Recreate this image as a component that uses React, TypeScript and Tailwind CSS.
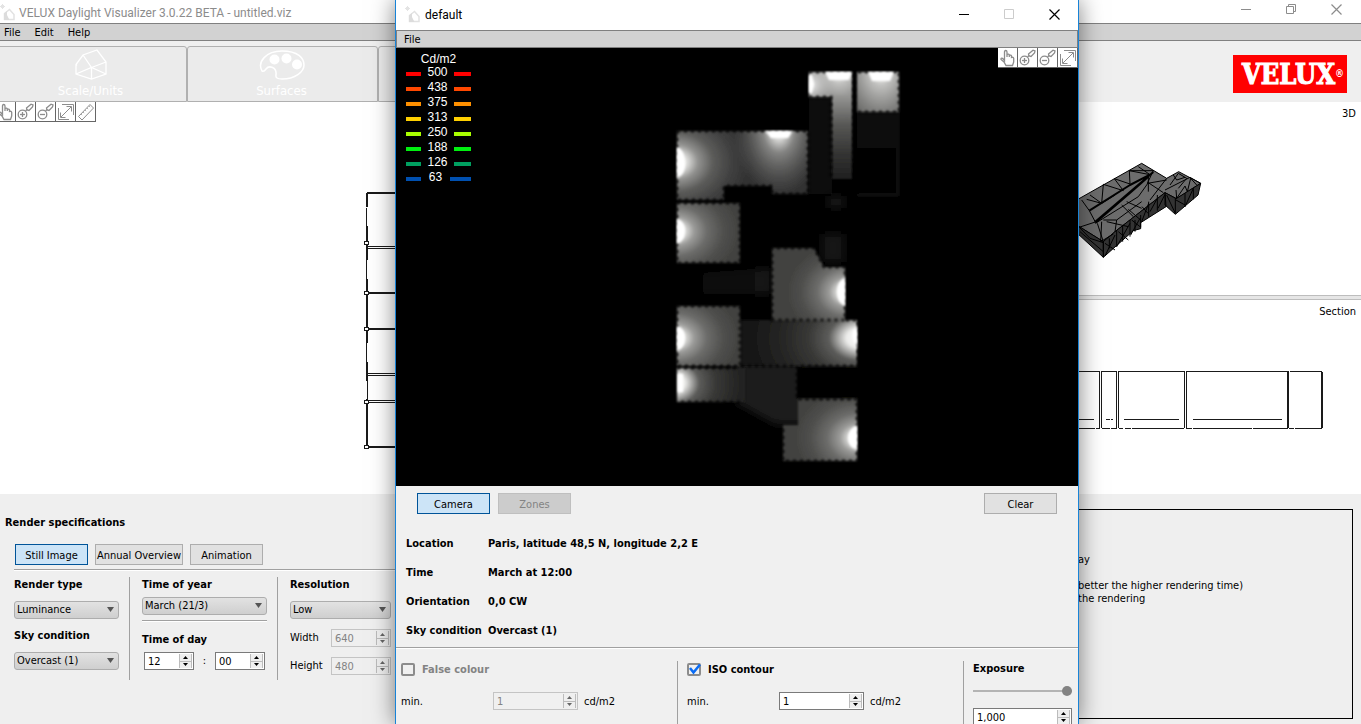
import React from 'react';

const legend = [
  { value: '500', bar: 'bg-[#ff0000]' },
  { value: '438', bar: 'bg-[#ff4800]' },
  { value: '375', bar: 'bg-[#ff9000]' },
  { value: '313', bar: 'bg-[#ffd000]' },
  { value: '250', bar: 'bg-[#aaff00]' },
  { value: '188', bar: 'bg-[#00f010]' },
  { value: '126', bar: 'bg-[#00a060]' },
  { value: '63', bar: 'bg-[#0050b0]' },
];

const details = [
  { label: 'Location', value: 'Paris, latitude 48,5 N, longitude 2,2 E' },
  { label: 'Time', value: 'March at 12:00' },
  { label: 'Orientation', value: '0,0 CW' },
  { label: 'Sky condition', value: 'Overcast (1)' },
];

/* ---------- icons ---------- */

const AppIcon = () => (
  <svg width="16" height="18" viewBox="0 0 16 18" fill="none" className="shrink-0">
    <path d="M4.500 15.500V9.500l5-4 4.500 5v5z" stroke="#e2e2e2" strokeWidth="1.500" />
    <path d="M4 16V9.500l3-2.500v4L9.500 16z" fill="#dcdcdc" />
    <path d="M2.500 0v5M0 2.500h5M1 1l3 3M4 1L1 4" stroke="#e4e4e4" />
  </svg>
);

const HandIcon = () => (
  <svg width="18" height="18" viewBox="0 0 18 18" fill="none" stroke="#8c8c8c" strokeWidth="1.300">
    <path d="M5.500 11.500V3q0-1.500 1.200-1.500T8 3v5V5.500q2-.8 2.300.5v2V6.300q1.900-.6 2.200.7v1.500q1.800-.8 2.200.8V13l-1.200 3.500H7L5 13 2 10.500q-.3-2 1.600-1.200z" />
  </svg>
);

const ZoomIcon = ({ plus }: { plus?: boolean }) => (
  <svg width="18" height="18" viewBox="0 0 18 18" fill="none" stroke="#8c8c8c" strokeWidth="1.300">
    <circle cx="5.500" cy="11.500" r="4.300" />
    <path d="M3 11.500h5" />
    {plus && <path d="M5.500 9v5" />}
    <path d="M8.500 8l2-2M10 7l-.5-2L14 1.200l2 .8-.5 2L12 7.500z" />
  </svg>
);

const FitIcon = () => (
  <svg width="18" height="18" viewBox="0 0 18 18" fill="none" stroke="#8c8c8c">
    <path d="M5 1.500h11.500V12M1.500 5v11.500H12M4 14L14 4M9.500 3.500h5v5M3.500 9.500v5h5" />
  </svg>
);

const RulerIcon = () => (
  <svg width="18" height="18" viewBox="0 0 18 18" fill="none" stroke="#8c8c8c">
    <path d="M1.500 13.500L13 1.500 16.500 5 5 17z" />
    <path d="M4 11l1.500 1.500M6 9l1.500 1.500M8 7l1.500 1.500M10 5l1.500 1.500M12 3l1.500 1.500" strokeDasharray="1 1" />
  </svg>
);

const HouseIcon = () => (
  <svg width="32" height="32" viewBox="0 0 32 32" fill="none" stroke="#fff" strokeWidth="1.300">
    <path d="M1 15.500L8 6 22 1l9 12v12L16.500 30 1 25zM8 6l8.500 12.500L31 13M16.500 18.500v11M1 25l15.500-6.500L31 25M1 15.500l1 1" />
  </svg>
);

const PaletteIcon = () => (
  <svg width="46" height="30" viewBox="0 0 46 30" fill="none" stroke="#fff" strokeWidth="1.500">
    <path d="M3 21C-2 12 7 1 23 1s22 7 22 14-9 14-22 14q-7 0-6-4c1-8-7-10-10-6q-2 3-4 2z" />
    <g fill="#fff" stroke="none">
      <circle cx="15.500" cy="9.500" r="5" />
      <circle cx="27.500" cy="8.500" r="5" />
      <circle cx="38" cy="14.500" r="5" />
    </g>
  </svg>
);

const MinimizeIcon = () => (
  <svg width="11" height="11" viewBox="0 0 11 11" stroke="currentColor"><path d="M0 5.500h10" /></svg>
);
const MaximizeIcon = () => (
  <svg width="11" height="11" viewBox="0 0 11 11" stroke="currentColor" fill="none"><path d="M.5.500h9v9h-9z" /></svg>
);
const RestoreIcon = () => (
  <svg width="11" height="11" viewBox="0 0 11 11" stroke="currentColor" fill="none">
    <path d="M.5 2.500h7v7h-7zM2.500 2V.500h7v7H8" />
  </svg>
);
const CloseIcon = () => (
  <svg width="11" height="11" viewBox="0 0 11 11" stroke="currentColor" strokeWidth="1.200"><path d="M.5.500l10 10M10.500.500l-10 10" /></svg>
);

/* ---------- controls ---------- */

const ToolButton = ({ label, children }: { label: string; children: React.ReactNode }) => (
  <button aria-label={label} className="flex h-5 w-5 items-center justify-center border-r border-b border-[#666] bg-white">
    {children}
  </button>
);

const PushButton = ({ active, disabled, wide, children }: { active?: boolean; disabled?: boolean; wide?: boolean; children: React.ReactNode }) => {
  const tone = active
    ? 'border-[#005499] bg-[#cce4f7]'
    : disabled
      ? 'border-[#bfbfbf] bg-[#cccccc] text-[#838383]'
      : 'border-[#adadad] bg-[#e1e1e1]';
  return (
    <button disabled={disabled} className={`h-[21px] border pt-[2px] text-center whitespace-nowrap ${wide ? 'w-[88px]' : 'w-[73px]'} ${tone}`}>
      {children}
    </button>
  );
};

const Dropdown = ({ id, value, label }: { id: string; value: string; label: string }) => (
  <div className="relative">
    <select
      id={id}
      aria-label={label}
      className="block h-[18px] w-full appearance-none rounded-[3px] border border-[#adadad] bg-linear-to-b from-[#e2e2e2] to-[#cfcfcf] pl-[2px] leading-4"
    >
      <option>{value}</option>
    </select>
    <svg width="7" height="5" viewBox="0 0 7 5" className="pointer-events-none absolute top-[6px] right-[5px]">
      <path d="M0 0h7L3.500 5z" fill="#555" />
    </svg>
  </div>
);

const Spinner = ({ id, value, disabled, label }: { id: string; value: string; disabled?: boolean; label: string }) => (
  <div className={`flex h-[18px] w-full border ${disabled ? 'border-[#c4c4c4] text-[#838383]' : 'border-[#7a7a7a] bg-white'}`}>
    <input id={id} aria-label={label} defaultValue={value} disabled={disabled} className="w-0 min-w-0 flex-1 bg-transparent pt-[2px] pl-[3px] outline-none" />
    <div className="m-px flex w-[13px] shrink-0 flex-col border-x border-[#bcbcbc] bg-[#efefef]">
      <button aria-label={`Increase ${label}`} disabled={disabled} className="flex flex-1 items-center justify-center border-b border-[#bcbcbc]">
        <svg width="5" height="3" viewBox="0 0 5 3"><path d="M0 3h5L2.500 0z" fill={disabled ? '#666' : '#000'} /></svg>
      </button>
      <button aria-label={`Decrease ${label}`} disabled={disabled} className="flex flex-1 items-center justify-center">
        <svg width="5" height="3" viewBox="0 0 5 3"><path d="M0 0h5L2.500 3z" fill={disabled ? '#666' : '#000'} /></svg>
      </button>
    </div>
  </div>
);

const CheckBox = ({ id, checked, label }: { id: string; checked?: boolean; label: string }) => (
  <div className="flex h-4 items-center gap-[7px]">
    <span className="relative flex">
      <input id={id} type="checkbox" defaultChecked={checked} className="peer h-[13px] w-[14px] appearance-none rounded-[2px] border-2 border-[#8c8c8c]" />
      <svg width="14" height="13" viewBox="0 0 14 13" fill="none" className="pointer-events-none absolute inset-0 hidden peer-checked:block">
        <path d="M3 5l3.500 4.500L13 1.500" stroke="#0a6cf5" strokeWidth="2.500" />
      </svg>
    </span>
    <label htmlFor={id} className={`pt-px font-bold ${checked ? '' : 'text-[#838383]'}`}>{label}</label>
  </div>
);

/* ---------- drawings ---------- */

const PlanDrawing = () => (
  <svg viewBox="0 0 180 840" className="mt-[58px] ml-[340px] h-[280px] w-[60px]" fill="none" stroke="#1a1a1a" shapeRendering="crispEdges">
    <path d="M81 39H180M81 339H180M81 447H180M81 801H180" strokeWidth="6" />
    <path d="M81 39V82M81 138V240M81 297V489M81 546V603M81 657V801" strokeWidth="6" />
    <path d="M80 84V138M80 240V297M80 489V546M82 603V657M81 199H180M81 205H180M81 580H180M81 586H180M81 661H180M81 667H180" strokeWidth="3" />
    <g fill="#fff" strokeWidth="3">
      <path d="M74 184h12v9H74zM74 334h12v9H74zM74 442h12v9H74zM74 660h12v9H74zM74 796h12v9H74z" />
    </g>
  </svg>
);

const ModelDrawing = () => (
  <svg viewBox="0 0 873 465" className="block h-[155px] w-[291px]" stroke="#000" strokeWidth="3" strokeLinejoin="round">
    <path d="M20 180L215 70 290 115 326 95 392 130 320 176 285 158 135 275 100 305 20 255z" fill="#6c6c6c" />
    <path d="M20 255L100 305V352L20 278zM100 305L135 275 285 158 288 200 212 248V266L190 272 100 352zM285 158L318 176 392 130 384 165 316 223 285 195z" fill="#333" />
    {/* long partition strips */}
    <path d="M235 110L190 150 76 248M75 246L250 96M58 212L180 135 240 104" fill="none" strokeWidth="6" />
    <path d="M178 92H250M205 80L240 104 178 92M60 165L95 190 100 133 160 152 133 116 180 132 178 92M50 178L95 190M35 180L58 212 76 246 27 262M95 190L135 165M76 250L205 170 235 128 280 158M235 110V155M215 185L140 240 100 240M110 245L175 260M155 195L190 230M170 185L215 205M95 245L92 305 130 282M82 250L100 305M140 240L135 275M175 208L212 240M250 92L232 130 290 120M290 115L240 180M300 135L325 100 350 115 325 145M310 105L320 120 345 112M285 150L360 112 392 130M318 150L320 175 345 138 352 155 362 115 380 135" fill="none" />
    <path d="M140 270V320M180 240V290M212 225V262M236 185V230M262 165V212M105 310L135 330M105 348L135 285M140 320L180 250M145 275L175 300M182 285L210 235M185 240L210 260M215 245L236 190M216 200L234 220M240 215L262 175M264 205L284 165M28 262L60 295 100 308M290 165L316 220M318 180L345 195M316 176V220M345 160V200L370 145V178M30 275L100 335M118 295V325M158 255V305M195 240V275" fill="none" />
  </svg>
);

const SectionDrawing = () => (
  <svg viewBox="0 0 873 432" className="block h-[144px] w-[291px]" fill="none" stroke="#1a1a1a" strokeWidth="3" shapeRendering="crispEdges">
    <path d="M0 64H88M94 64H140M146 64H343M349 64H654M660 64H756" />
    <path d="M0 235H75M79 235H90M96 235H120M124 235H140M146 235H160M166 235H183M187 235H343M349 235H365M370 235H546M550 235H654M658 235H672M676 235H756" />
    <path d="M88 64V235M94 64V235M140 64V235M146 64V235M343 64V235M349 64V235M0 208H72M108 208H120M123 208H129M162 208H327M369 208H636" />
    <path d="M654 64V235M756 66V233" strokeWidth="6" />
  </svg>
);

type Glow = { id: string; x: number; y: number; rx: number; ry: number; tones: string[] };

const roomTones = ['#9a9a98', '#6c6c6a', '#50504e', '#424240'];
const hallTones = ['#c0c0be', '#a4a4a2', '#848482', '#686866'];
const dimTones = ['#5c5c5a', '#383836', '#262625', '#191919'];

const glows: Glow[] = [
  { id: 'topHall', x: 839, y: 70, rx: 40, ry: 46, tones: hallTones },
  { id: 'topRight', x: 881, y: 70, rx: 38, ry: 52, tones: hallTones },
  { id: 'living', x: 675, y: 162, rx: 76, ry: 60, tones: ['#929290', '#5c5c5a', '#404040', '#303030'] },
  { id: 'roomA', x: 675, y: 231, rx: 64, ry: 50, tones: roomTones },
  { id: 'roomB', x: 847, y: 292, rx: 60, ry: 50, tones: roomTones },
  { id: 'roomC', x: 675, y: 338, rx: 64, ry: 50, tones: roomTones },
  { id: 'passage', x: 860, y: 338, rx: 104, ry: 76, tones: dimTones },
  { id: 'corridor', x: 674, y: 383, rx: 84, ry: 70, tones: dimTones },
  { id: 'roomD', x: 859, y: 438, rx: 64, ry: 50, tones: roomTones },
];

// Luminance result of the rendered floor plan, one radial falloff per window
const Luminance = () => (
  <svg viewBox="396 48 682 438" className="block h-[438px] w-full bg-black">
    <defs>
      {glows.map((g) => (
        <radialGradient
          key={g.id}
          id={g.id}
          gradientUnits="userSpaceOnUse"
          cx="0"
          cy="0"
          r="1"
          gradientTransform={`translate(${g.x} ${g.y}) scale(${g.rx} ${g.ry})`}
        >
          <stop offset="0" stopColor="#ffffff" />
          <stop offset=".13" stopColor="#ececea" />
          <stop offset=".3" stopColor={g.tones[0]} />
          <stop offset=".5" stopColor={g.tones[1]} />
          <stop offset=".75" stopColor={g.tones[2]} />
          <stop offset="1" stopColor={g.tones[3]} />
        </radialGradient>
      ))}
      <radialGradient id="livingTop" gradientUnits="userSpaceOnUse" cx="0" cy="0" r="1" gradientTransform="translate(779 129) scale(46 68)">
        <stop offset="0" stopColor="#fff" />
        <stop offset=".16" stopColor="#e8e8e6" stopOpacity=".9" />
        <stop offset=".35" stopColor="#a0a09e" stopOpacity=".75" />
        <stop offset=".65" stopColor="#787876" stopOpacity=".5" />
        <stop offset="1" stopColor="#666" stopOpacity="0" />
      </radialGradient>
      <radialGradient id="hallLeft" gradientUnits="userSpaceOnUse" cx="809" cy="85" r="26">
        <stop offset="0" stopColor="#fff" />
        <stop offset="1" stopColor="#aaa" stopOpacity="0" />
      </radialGradient>
      <linearGradient id="hallDown" x1="0" y1="0" x2="0" y2="1">
        <stop offset="0" stopColor="#989896" />
        <stop offset=".35" stopColor="#585856" />
        <stop offset=".7" stopColor="#343433" />
        <stop offset="1" stopColor="#202020" />
      </linearGradient>
      <linearGradient id="faint" x1="0" y1="0" x2="1" y2="0">
        <stop offset="0" stopColor="#020202" />
        <stop offset=".6" stopColor="#0c0c0c" />
        <stop offset="1" stopColor="#161616" />
      </linearGradient>
      <filter id="soft"><feGaussianBlur stdDeviation="0.8" /></filter>
      <filter id="softer" x="-30%" y="-30%" width="160%" height="160%"><feGaussianBlur stdDeviation="4" /></filter>
    </defs>
    <g filter="url(#soft)">
      <path d="M809 98h23v97h-23zM857 112h42v84h-42z" fill="#0b0b0b" />
      <path d="M852 148h44v47h-44z" fill="#040404" />
      <path d="M898 112v83h-40" fill="none" stroke="#141414" strokeWidth="2" />
      <path d="M724 186h48v8h73v126H740V203h-16z" fill="#040404" />
      <path d="M678 403h60l34 12 25 10-14 36H678z" fill="#050505" />
    </g>
    <g filter="url(#softer)">
      <path d="M678 274l94-6v26H678z" fill="url(#faint)" />
      <path d="M828 196h16v12h-16z" fill="#181818" />
      <path d="M822 234h22v28h-22z" fill="#141414" />
      <path d="M735 362h70v38l20 24h-50l-40-22z" fill="#1a1a1a" />
    </g>
    <g filter="url(#soft)">
      <path d="M797 367h60v32h-60z" fill="#030303" />
      <path d="M809 72h43v25h-43z" fill="url(#topHall)" />
      <path d="M809 72h43v25h-43z" fill="url(#hallLeft)" />
      <path d="M832 95h20v84h-20z" fill="url(#hallDown)" />
      <path d="M857 72h42v40h-42z" fill="url(#topRight)" />
      <path d="M677 131h131v63h-36v-8h-48v14h-47z" fill="url(#living)" />
      <path d="M677 131h131v63h-36v-8h-48z" fill="url(#livingTop)" />
      <path d="M677 203h63v60h-63z" fill="url(#roomA)" />
      <path d="M740 320h117v46H740z" fill="url(#passage)" />
      <path d="M772 248h42l10 19h21v53h-73z" fill="url(#roomB)" />
      <path d="M677 306h63v60h-63z" fill="url(#roomC)" />
      <path d="M677 368h68v34h-68z" fill="url(#corridor)" />
      <path d="M798 399h59v62h-74v-36h15z" fill="url(#roomD)" />
    </g>
    {/* sampled wall edges */}
    <g fill="none" stroke="#000" strokeWidth="3" strokeDasharray="3 4" opacity=".7" filter="url(#soft)">
      <path d="M809 72h90v40h-42M854 74v106M809 97h22v82M677 131h131v63h-36v-8h-48v14h-47z" />
      <path d="M677 203h63v60h-63zM772 320v-72h42l10 19h21v53zM677 306h63v60h-63z" />
      <path d="M741 366h56v33h60M740 402h-63M677 368h63M846 320h12v46h-60M798 399h59v62h-74v-36" />
    </g>
    {/* windows */}
    <g fill="#fff" filter="url(#soft)">
      <path d="M825 72h27l-3 8h-20zM868 72h26l-4 9h-18zM809 75h3l2 9-2 9h-3z" />
      <path d="M677 147q7 2 8 15t-8 16zM765 131h28l-5 7h-17z" />
      <path d="M677 219q8 2 8 12t-8 13zM845 277q-8 4-8 15t8 14z" />
      <path d="M677 326q8 2 8 12t-8 13zM857 327q-6 3-4 10t4 11zM678 374h5v18h-5zM857 425q-9 4-9 13t9 12z" />
    </g>
  </svg>
);

/* ---------- windows ---------- */

const MainWindow = () => (
  <div className="flex h-full flex-col">
    <header className="flex h-[23px] shrink-0 items-center justify-between bg-white text-[#8c8c8c]">
      <div className="flex items-center gap-[3px] pt-[2px] font-['Roboto',sans-serif] text-[12px]">
        <AppIcon />
        <span>VELUX Daylight Visualizer 3.0.22 BETA - untitled.viz</span>
      </div>
      <div className="flex gap-[34px] pr-[19px] pb-1">
        <button aria-label="Minimize"><MinimizeIcon /></button>
        <button aria-label="Restore"><RestoreIcon /></button>
        <button aria-label="Close"><CloseIcon /></button>
      </div>
    </header>
    <nav className="flex h-[18px] shrink-0 items-center gap-[14px] border-y border-[#808080] bg-[#d2d2d2] pt-px pl-1">
      <button>File</button>
      <button>Edit</button>
      <button>Help</button>
    </nav>

    <div className="flex h-[61px] shrink-0 items-end justify-between">
      <div className="flex text-[13px] text-white">
        <button className="-ml-1 flex h-14 w-[191px] flex-col items-center justify-between rounded-t-[3px] border border-[#b0b0b0] bg-[#ebebeb] pt-[2px] pr-[2px] pb-[2px] leading-4">
          <HouseIcon />
          Scale/Units
        </button>
        <button className="flex h-14 w-[191px] flex-col items-center justify-between rounded-t-[3px] border border-[#b0b0b0] bg-[#ebebeb] pt-[3px] pr-[2px] pb-[2px] leading-4">
          <PaletteIcon />
          Surfaces
        </button>
        <button aria-label="Next step" className="h-14 w-[191px] rounded-t-[3px] border border-[#b0b0b0] bg-[#ebebeb]" />
      </div>
      <div className="mr-[14px] mb-[9px] flex h-[38px] w-[114px] items-center justify-end bg-[#ff0000] pr-[3px] font-['DejaVu_Serif_Condensed','DejaVu_Serif',serif] text-[27px] leading-none font-bold text-white [-webkit-text-stroke:1px_white]">
        VELUX<span className="font-['DejaVu_Sans_Condensed',sans-serif] text-[10px] [-webkit-text-stroke:0]">®</span>
      </div>
    </div>

    <main className="flex min-h-0 flex-1 bg-white">
      <section className="min-w-0 flex-1">
        <div className="-ml-1 flex">
          <ToolButton label="Pan"><HandIcon /></ToolButton>
          <ToolButton label="Zoom in"><ZoomIcon plus /></ToolButton>
          <ToolButton label="Zoom out"><ZoomIcon /></ToolButton>
          <ToolButton label="Fit view"><FitIcon /></ToolButton>
          <ToolButton label="Measure"><RulerIcon /></ToolButton>
        </div>
        <PlanDrawing />
      </section>
      <section className="w-[291px] shrink-0">
        <h2 className="h-[38px] pt-1 pr-[5px] text-right">3D</h2>
        <ModelDrawing />
        <div className="h-[5px] border-y border-[#bdbdbd] bg-[#e6e6e6]" />
        <h2 className="h-[50px] pt-1 pr-[5px] text-right">Section</h2>
        <SectionDrawing />
      </section>
    </main>

    <footer className="flex h-[230px] shrink-0 justify-between">
      <section className="w-[480px] pt-[21px]">
        <h2 className="pl-[5px] font-bold">Render specifications</h2>
        <div className="mt-[13px] flex gap-[7px] pl-[15px]">
          <PushButton active>Still Image</PushButton>
          <PushButton wide>Annual Overview</PushButton>
          <PushButton>Animation</PushButton>
        </div>
        <div className="mt-1 ml-[14px] h-[2px] border-t border-[#a0a0a0] bg-white" />
        <div className="mt-[6px] ml-[14px] flex h-[103px]">
          <div className="w-[116px] border-r border-[#a0a0a0] pr-[10px]">
            <label htmlFor="render-type" className="mb-2 block font-bold">Render type</label>
            <Dropdown id="render-type" label="Render type" value="Luminance" />
            <label htmlFor="sky" className="mt-[9px] mb-2 block font-bold">Sky condition</label>
            <Dropdown id="sky" label="Sky condition" value="Overcast (1)" />
          </div>
          <div className="w-[148px] border-r border-[#a0a0a0] pr-[10px] pl-3">
            <label htmlFor="year" className="mb-1 block font-bold">Time of year</label>
            <Dropdown id="year" label="Time of year" value="March (21/3)" />
            <div className="mt-[5px] h-[2px] border-t border-[#a0a0a0] bg-white" />
            <label htmlFor="hour" className="mt-[10px] mb-1 block font-bold">Time of day</label>
            <div className="flex items-center px-[2px]">
              <div className="w-[50px]"><Spinner id="hour" label="Hour" value="12" /></div>
              <span className="w-[21px] text-center">:</span>
              <div className="w-[50px]"><Spinner id="minute" label="Minute" value="00" /></div>
            </div>
          </div>
          <div className="w-[113px] pl-3">
            <label htmlFor="resolution" className="mb-2 block font-bold">Resolution</label>
            <Dropdown id="resolution" label="Resolution" value="Low" />
            <div className="mt-[10px] flex items-center">
              <label htmlFor="width" className="w-[41px] shrink-0">Width</label>
              <Spinner id="width" label="Width" value="640" disabled />
            </div>
            <div className="mt-[10px] flex items-center">
              <label htmlFor="height" className="w-[41px] shrink-0">Height</label>
              <Spinner id="height" label="Height" value="480" disabled />
            </div>
          </div>
        </div>
      </section>
      <section className="mt-[15px] mr-2 mb-[5px] w-[300px] border border-black pt-[43px] pl-[24px] leading-[13px]">
        <p>ay</p>
        <p className="mt-[13px]">better the higher rendering time)</p>
        <p>the rendering</p>
      </section>
    </footer>
  </div>
);

const RenderDialog = () => (
  <div
    role="dialog"
    aria-label="default"
    className="absolute top-0 left-[395px] flex h-full w-[684px] flex-col overflow-hidden border-x border-[#1883d7] bg-[#f0f0f0] shadow-[0_0_22px_rgba(0,0,0,0.5)]"
  >
    <header className="flex h-[30px] shrink-0 items-center justify-between bg-white">
      <div className="flex items-center gap-1 pl-[9px] font-['Roboto',sans-serif] text-[12px]">
        <AppIcon />
        <span>default</span>
      </div>
      <div className="flex gap-[34px] pr-[18px] pb-px">
        <button aria-label="Minimize"><MinimizeIcon /></button>
        <button aria-label="Maximize" disabled className="text-[#cccccc]"><MaximizeIcon /></button>
        <button aria-label="Close"><CloseIcon /></button>
      </div>
    </header>
    <nav className="flex h-[18px] shrink-0 items-center border border-[#808080] bg-[#d2d2d2] pt-px pl-[7px]">
      <button>File</button>
    </nav>

    <div className="relative shrink-0">
      <Luminance />
      <div className="absolute top-1 left-[10px] w-[65px] font-['Liberation_Sans',Arial,sans-serif] text-[12px] leading-[15px] text-white">
        <div className="h-[13px] text-center">Cd/m2</div>
        {legend.map((row) => (
          <div key={row.value} className="flex h-[15px] items-center justify-between">
            <span className={`mt-[2px] h-1 w-[15px] ${row.bar}`} />
            <span>{row.value}</span>
            <span className={`mt-[2px] h-1 ${row.bar} ${row.value.length < 3 ? 'w-[21px]' : 'w-[17px]'}`} />
          </div>
        ))}
      </div>
      <div className="absolute top-0 right-0 flex">
        <ToolButton label="Pan"><HandIcon /></ToolButton>
        <ToolButton label="Zoom in"><ZoomIcon plus /></ToolButton>
        <ToolButton label="Zoom out"><ZoomIcon /></ToolButton>
        <ToolButton label="Fit view"><FitIcon /></ToolButton>
      </div>
    </div>

    <div className="mt-[7px] flex shrink-0 justify-between px-[21px]">
      <div className="flex gap-2">
        <PushButton active>Camera</PushButton>
        <PushButton disabled>Zones</PushButton>
      </div>
      <PushButton>Clear</PushButton>
    </div>
    <dl className="mt-[22px] flex shrink-0 flex-col gap-[13px] pl-[10px] font-bold">
      {details.map((d) => (
        <div key={d.label} className="flex">
          <dt className="w-[82px] whitespace-nowrap">{d.label}</dt>
          <dd>{d.value}</dd>
        </div>
      ))}
    </dl>
    <div className="mt-2 h-[2px] shrink-0 border-t border-[#a0a0a0] bg-white" />

    <div className="mt-3 flex min-h-0 flex-1">
      <div className="w-[282px] border-r border-[#a0a0a0] pl-[5px]">
        <CheckBox id="false-colour" label="False colour" />
        <div className="mt-[15px] flex items-center">
          <label htmlFor="false-min" className="w-[92px] pt-[2px]">min.</label>
          <div className="w-[85px]"><Spinner id="false-min" label="False colour minimum" value="1" disabled /></div>
          <span className="ml-[6px] pt-[2px]">cd/m2</span>
        </div>
      </div>
      <div className="w-[286px] border-r border-[#a0a0a0] pl-[9px]">
        <CheckBox id="iso-contour" label="ISO contour" checked />
        <div className="mt-[15px] flex items-center">
          <label htmlFor="iso-min" className="w-[92px] pt-[2px]">min.</label>
          <div className="w-[85px]"><Spinner id="iso-min" label="ISO contour minimum" value="1" /></div>
          <span className="ml-[6px] pt-[2px]">cd/m2</span>
        </div>
      </div>
      <div className="flex-1 pr-[6px] pl-[9px]">
        <label htmlFor="exposure" className="block font-bold">Exposure</label>
        <input
          id="exposure"
          type="range"
          defaultValue="100"
          className="mt-[6px] mb-[10px] block h-[15px] w-full appearance-none bg-transparent [&::-webkit-slider-runnable-track]:h-[2px] [&::-webkit-slider-runnable-track]:bg-[#b4b4b4] [&::-webkit-slider-thumb]:-mt-1 [&::-webkit-slider-thumb]:h-[10px] [&::-webkit-slider-thumb]:w-[10px] [&::-webkit-slider-thumb]:appearance-none [&::-webkit-slider-thumb]:rounded-full [&::-webkit-slider-thumb]:bg-[#838383]"
        />
        <Spinner id="exposure-value" label="Exposure value" value="1,000" />
      </div>
    </div>
  </div>
);

export default function App() {
  return (
    <div className="relative h-screen overflow-hidden bg-[#efefef] font-['DejaVu_Sans_Condensed','DejaVu_Sans',sans-serif] text-[11px] leading-4 text-black">
      <MainWindow />
      <RenderDialog />
    </div>
  );
}
